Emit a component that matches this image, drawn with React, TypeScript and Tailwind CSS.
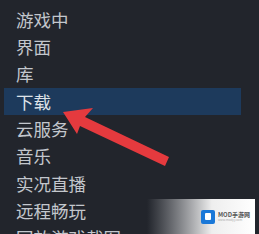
import React from "react";

const items = ["游戏中", "界面", "库", "下载", "云服务", "音乐", "实况直播", "远程畅玩", "回放游戏截图"];

export default function App() {
  return (
    <div
      className="relative w-[259px] h-[234px] overflow-hidden bg-[#22252c]"
      style={{ fontFamily: '"Noto Sans CJK SC", "Noto Sans", sans-serif' }}
    >
      <div className="flex flex-col pt-[6px]">
        {items.map((t, i) => (
          <div
            key={t}
            className={
              "flex items-center h-[27.3px] pl-[12px] ml-[4px] mr-[18px] text-[17.5px] leading-none " +
              (i === 3 ? "bg-[#1d3a5c] text-[#dde2e8]" : "text-[#c3c7cd]")
            }
          >
            <span>{t}</span>
          </div>
        ))}
      </div>

      <svg className="absolute left-0 top-0" width="259" height="234" viewBox="0 0 259 234">
        <polygon points="63,112 93,108 85,117 169,157 165,166 80,126 77,134" fill="#e53a3e" />
      </svg>

      <div className="absolute left-[147px] top-[199px] w-[108px] h-[35px] bg-gradient-to-r from-[#22252c] via-[#eeeeee] via-60% to-[#ffffff] flex items-center justify-end pr-[5px]">
        <div className="flex items-center gap-[3px]">
          <div className="w-[14px] h-[14px] rounded-[2px] bg-[#1a78d8] flex items-center justify-center">
            <div className="w-[6px] h-[7px] bg-white rounded-[1px]" />
          </div>
          <div className="flex flex-col leading-none">
            <span className="text-[6px] text-[#555] font-bold">MOD手游网</span>
            <span className="text-[3px] text-[#aaa] mt-[1px]">www.modyy.com</span>
          </div>
        </div>
      </div>
    </div>
  );
}
